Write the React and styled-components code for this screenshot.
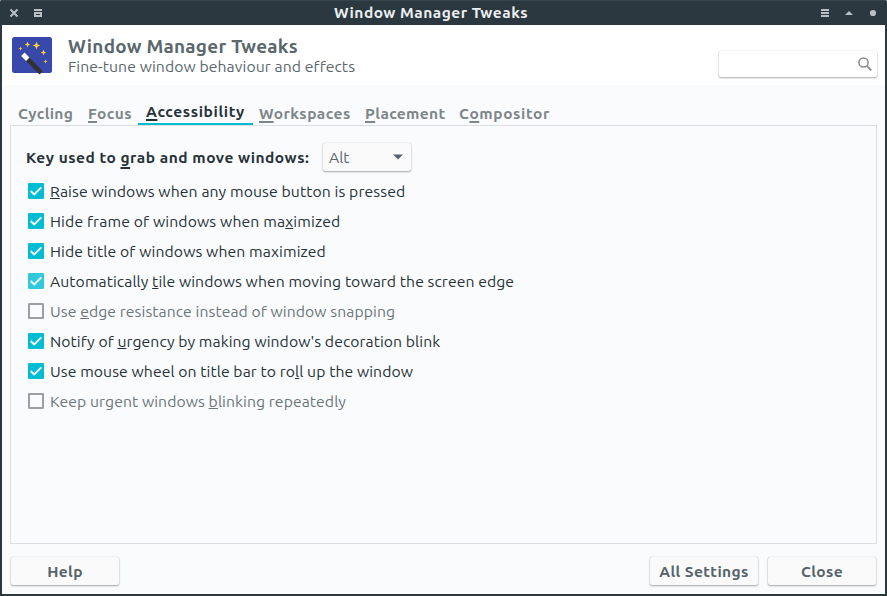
import React from "react";
import styled, { createGlobalStyle } from "styled-components";

const GlobalStyle = createGlobalStyle`
  *, *::before, *::after { box-sizing: border-box; }
  html, body { margin: 0; padding: 0; background: #fff; overflow: hidden; }
  button, input { font: inherit; border: 0; margin: 0; padding: 0; outline: 0; }
`;

const Window = styled.div`
  display: flex;
  flex-direction: column;
  width: 887px;
  height: 596px;
  padding: 0 2px 2px;
  border-radius: 2px 2px 0 0;
  background: #2b383f;
  color: #263238;
  font-family: Ubuntu, "Noto Sans", sans-serif;
  font-size: 15.75px;
  white-space: nowrap;
`;

const TitleBar = styled.header`
  display: grid;
  grid-template-columns: 70px 1fr 96px;
  align-items: center;
  height: 25px;
  margin: 0 -2px;
  padding: 0 8px;
  border-top: 1px solid #37464e;
  border-radius: 2px 2px 0 0;
  flex: none;
`;

const TitleText = styled.h1`
  margin: 0;
  padding-left: 1px;
  text-align: center;
  color: #eceff1;
  font-size: 15.5px;
  line-height: 22px;
  font-weight: 700;
`;

const WindowControls = styled.div`
  display: flex;
  gap: 12px;
  justify-content: ${(p) => (p.$end ? "flex-end" : "flex-start")};
  svg { display: block; flex: none; }
`;

const Tracked = styled.span`
  letter-spacing: ${(p) => p.$track || 0}px;
`;

const Mnemonic = styled.span`
  text-decoration: underline;
  text-decoration-skip-ink: none;
  text-decoration-thickness: ${(p) => (p.$bold ? 2 : 1)}px;
  text-underline-offset: ${(p) => p.$drop}px;
`;

const Banner = styled.section`
  display: flex;
  align-items: flex-start;
  height: 60px;
  padding: 11px 8px 0 10px;
  background: #fff;
  flex: none;
`;

const BannerText = styled.div`
  flex: 1;
  margin: 0 0 0 16px;
  color: #5a676d;
`;

const BannerTitle = styled.h2`
  margin: 0;
  font-size: 18.9px;
  line-height: 20px;
  font-weight: 700;
`;

const BannerSubtitle = styled.p`
  margin: 0;
  line-height: 20px;
`;

const raised = `
  border-radius: 2px;
  box-shadow: 0 0 1px rgba(0,0,0,.25), 0 1px 2px rgba(0,0,0,.32);
`;

const SearchField = styled.label`
  ${raised}
  display: flex;
  align-items: center;
  width: 158px;
  height: 26px;
  margin-top: 15px;
  padding-right: 5px;
  background: #fff;
  input { flex: 1; min-width: 0; background: transparent; }
`;

const Body = styled.main`
  display: flex;
  flex-direction: column;
  flex: 1;
  padding: 11px 8px 9px;
  background: #fafbfd;
`;

const TabList = styled.nav`
  display: flex;
  height: 29px;
  padding-left: 1px;
  flex: none;
`;

const Tab = styled.button`
  display: flex;
  align-items: flex-start;
  width: ${(p) => p.$width}px;
  height: 29px;
  margin: 0 ${(p) => (p.$active ? -1 : 0)}px;
  padding: ${(p) => (p.$active ? "6px 0 0 8px" : "8px 0 0 7px")};
  background: transparent;
  color: ${(p) => (p.$active ? "#263238" : "#7d8689")};
  box-shadow: ${(p) => (p.$active ? "inset 0 -2px #00bcd4" : "none")};
  font-size: 15.5px;
  font-weight: 700;
  line-height: 20px;
`;

const Panel = styled.section`
  flex: 1;
  padding: 14px 15px;
  border: 1px solid #dcdfe1;
`;

const KeyRow = styled.div`
  display: flex;
  align-items: center;
  height: 34px;
`;

const KeyLabel = styled.span`
  width: 297px;
  font-size: 15.5px;
  font-weight: 700;
  line-height: 22px;
  padding-top: 2px;
`;

const Combo = styled.button`
  ${raised}
  display: flex;
  align-items: center;
  justify-content: space-between;
  width: 88px;
  height: 28px;
  padding: 0 8px 0 6px;
  background: #fafafa;
  color: #5a676d;
  line-height: 22px;
`;

const OptionRow = styled.label`
  display: flex;
  align-items: center;
  gap: 6px;
  height: 30px;
  padding-left: 2px;
  color: ${(p) => (p.$muted ? "#6b767a" : "#263238")};
  line-height: 20px;
`;

const CheckBox = styled.span`
  width: 16px;
  height: 16px;
  border-radius: 1px;
  background: ${(p) => (p.$checked ? (p.$soft ? "#33c9dc" : "#00bcd4") : "transparent")};
  border: ${(p) => (p.$checked ? "0" : "2px solid #9a9fa2")};
  svg { display: block; }
`;

const OptionList = styled.div`
  margin-top: 2px;
`;

const Footer = styled.footer`
  display: flex;
  gap: 10px;
  margin-top: 13px;
  padding: 0 1px;
  flex: none;
`;

const ActionButton = styled.button`
  ${raised}
  width: 108px;
  height: 28px;
  padding-top: 2px;
  margin-right: ${(p) => (p.$push ? "auto" : 0)};
  background: #fafafa;
  color: #56636a;
  font-size: 15.5px;
  font-weight: 700;
  line-height: 20px;
`;

/* An underscore marks the mnemonic that follows it. */
function Text({ value, track, bold, drop = bold ? 2 : 1 }) {
  const at = value.indexOf("_");
  if (at < 0) return <Tracked $track={track}>{value}</Tracked>;
  return (
    <Tracked $track={track}>
      {value.slice(0, at)}
      <Mnemonic $bold={bold} $drop={drop}>{value[at + 1]}</Mnemonic>
      {value.slice(at + 2)}
    </Tracked>
  );
}

const tabs = [
  { text: "Cycling", width: 70, track: 0.35 },
  { text: "_Focus", width: 58, track: 0.4 },
  { text: "_Accessibility", width: 115, track: 0.62, active: true },
  { text: "_Workspaces", width: 106, track: 0.45 },
  { text: "_Placement", width: 94, track: 0.35 },
  { text: "C_ompositor", width: 110, track: 0.6 },
];

const options = [
  { text: "_Raise windows when any mouse button is pressed", checked: true, track: 0.1 },
  { text: "Hide frame of windows when ma_ximized", checked: true, track: 0.13 },
  { text: "Hide title of windows when maximized", checked: true, track: 0.1 },
  { text: "Automatically _tile windows when moving toward the screen edge", checked: true, soft: true, track: 0.07 },
  { text: "Use _edge resistance instead of window snapping", track: 0.07 },
  { text: "Notify of _urgency by making window's decoration blink", checked: true, track: 0.06 },
  { text: "Use mouse wheel on title bar to ro_ll up the window", checked: true, track: 0.07 },
  { text: "Keep urgent windows _blinking repeatedly", track: 0.07 },
];

const sparkles = [
  [24.5, 9.5, 4],
  [15.5, 8.5, 2.9],
  [31.5, 16.5, 2.9],
  [8.5, 12.5, 2],
  [33.5, 25.5, 2],
];

function WandIcon() {
  return (
    <svg width="40" height="40" viewBox="0 0 40 40">
      <rect y="1" width="40" height="36" rx="2.5" fill="#3949ab" />
      {sparkles.map(([x, y, r]) => (
        <path
          key={x}
          fill="#fdd22f"
          d={`M${x} ${y - r}L${x + r * 0.28} ${y - r * 0.28}L${x + r} ${y}L${x + r * 0.28} ${y + r * 0.28}L${x} ${y + r}L${x - r * 0.28} ${y + r * 0.28}L${x - r} ${y}L${x - r * 0.28} ${y - r * 0.28}Z`}
        />
      ))}
      <path d="M10.8 18.2L29.2 36.9" stroke="#303235" strokeWidth="4.8" />
      <path d="M10.8 18.2L15.8 23.2" stroke="#fff" strokeWidth="4.8" />
    </svg>
  );
}

function ControlIcon({ children }) {
  return (
    <svg width="12" height="12" viewBox="0 0 12 12" fill="#b9c1c5">
      {children}
    </svg>
  );
}

export default function App() {
  return (
    <>
      <GlobalStyle />
      <Window>
        <TitleBar>
          <WindowControls>
            <ControlIcon>
              <path d="M2.5 2.5L9.5 9.5M9.5 2.5L2.5 9.5" stroke="#b9c1c5" strokeWidth="2" />
            </ControlIcon>
            <ControlIcon>
              <path fillRule="evenodd" d="M2 2h8v2H2zM2 5h8v5H2zM4 7h4v1H4z" />
            </ControlIcon>
          </WindowControls>
          <TitleText>
            <Text value="Window Manager Tweaks" track={0.48} />
          </TitleText>
          <WindowControls $end>
            <ControlIcon>
              <path d="M2 2h8v2H2zM2 5h8v2H2zM2 8h8v2H2z" />
            </ControlIcon>
            <ControlIcon>
              <path d="M2 8L6 4L10 8z" />
            </ControlIcon>
            <ControlIcon>
              <circle cx="6" cy="6" r="3.1" />
            </ControlIcon>
          </WindowControls>
        </TitleBar>

        <Banner>
          <WandIcon />
          <BannerText>
            <BannerTitle>
              <Text value="Window Manager Tweaks" track={0.26} />
            </BannerTitle>
            <BannerSubtitle>
              <Text value="Fine-tune window behaviour and effects" track={0.08} />
            </BannerSubtitle>
          </BannerText>
          <SearchField>
            <input aria-label="Search" />
            <svg width="14" height="14" viewBox="0 0 14 14" fill="none" stroke="#8b8b8b">
              <circle cx="5.5" cy="5.5" r="4.6" strokeWidth="1.5" />
              <path d="M8.8 8.8L13.3 13.3" strokeWidth="1.9" />
            </svg>
          </SearchField>
        </Banner>

        <Body>
          <TabList>
            {tabs.map((t) => (
              <Tab key={t.text} $active={t.active} $width={t.width}>
                <Text value={t.text} track={t.track} bold />
              </Tab>
            ))}
          </TabList>

          <Panel>
            <KeyRow>
              <KeyLabel>
                <Text value="Key used to _grab and move windows:" track={0.51} bold drop={4} />
              </KeyLabel>
              <Combo>
                <Text value="Alt" track={0} />
                <svg width="10" height="6" viewBox="0 0 10 6" fill="#56636a">
                  <path d="M0 .5h10L5 5.5z" />
                </svg>
              </Combo>
            </KeyRow>
            <OptionList>
              {options.map((o) => (
                <OptionRow key={o.text} $muted={!o.checked}>
                  <CheckBox $checked={o.checked} $soft={o.soft}>
                    {o.checked && (
                      <svg width="16" height="16" viewBox="0 0 16 16">
                        <path d="M2.7 8L6.2 11.5L13.3 4.4" fill="none" stroke="#fff" strokeWidth="1.9" />
                      </svg>
                    )}
                  </CheckBox>
                  <Text value={o.text} track={o.track} />
                </OptionRow>
              ))}
            </OptionList>
          </Panel>

          <Footer>
            <ActionButton $push>
              <Text value="Help" track={0.4} />
            </ActionButton>
            <ActionButton>
              <Text value="All Settings" track={0.4} />
            </ActionButton>
            <ActionButton>
              <Text value="Close" track={0.4} />
            </ActionButton>
          </Footer>
        </Body>
      </Window>
    </>
  );
}
